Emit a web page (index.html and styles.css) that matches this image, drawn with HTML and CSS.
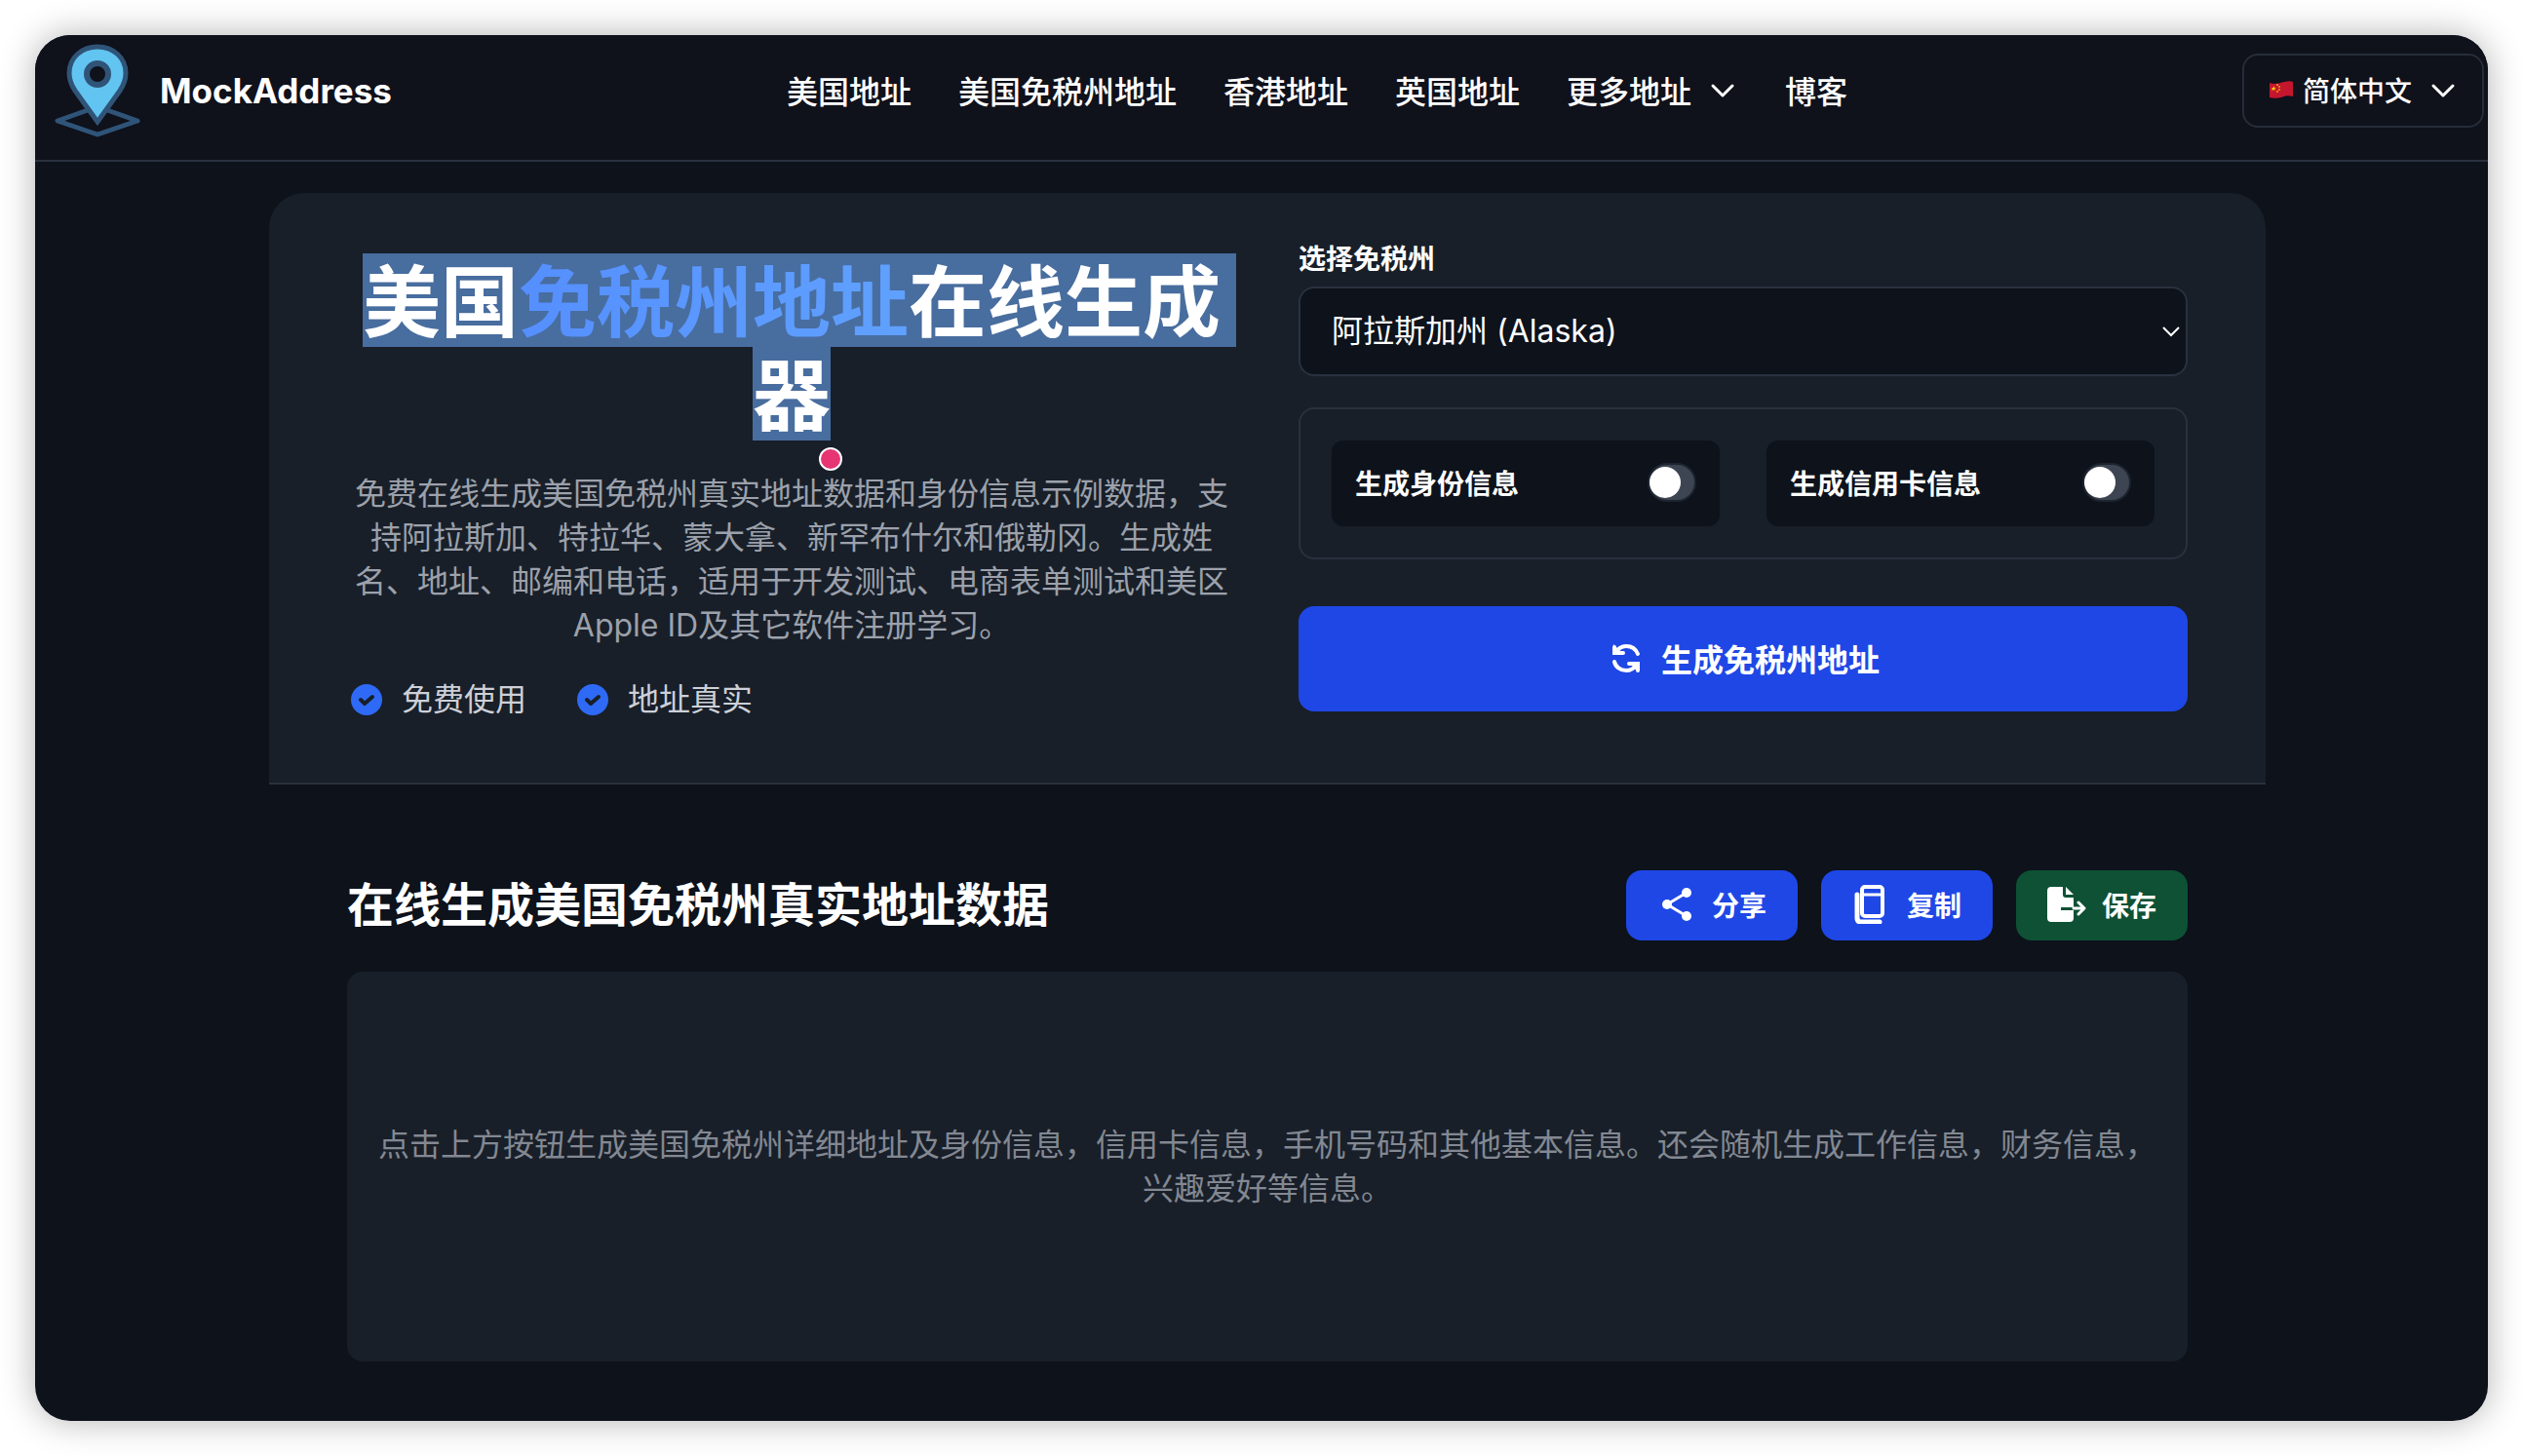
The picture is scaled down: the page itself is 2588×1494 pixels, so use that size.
FILE: index.html
```html
<!DOCTYPE html>
<html lang="zh-CN">
<head>
  <meta charset="UTF-8" />
  <meta name="viewport" content="width=device-width, initial-scale=1.0" />
  <title>美国免税州地址在线生成器 - MockAddress</title>
  <link rel="stylesheet" href="styles.css">
</head>
<body>
  <div class="window">
    <header class="site-header">
      <a href="#" class="brand">
        <svg class="brand-logo" viewBox="0 0 96 96" aria-hidden="true">
          <path d="M38 68 L7 79 L48 93 L89 79 L58 68" fill="none" stroke="#2f5478" stroke-width="5" stroke-linejoin="round"/>
          <path d="M48 80 L25 48 C21 42 19 36 19 30 C19 14 32 3 48 3 C64 3 77 14 77 30 C77 36 75 42 71 48 Z" fill="#62c4f1" stroke="#2f5478" stroke-width="5"/>
          <circle cx="48" cy="31" r="11" fill="#0f111b" stroke="#2f5478" stroke-width="6"/>
        </svg>
        <span>MockAddress</span>
      </a>
      <nav class="main-nav">
        <a href="#">美国地址</a>
        <a href="#">美国免税州地址</a>
        <a href="#">香港地址</a>
        <a href="#">英国地址</a>
        <a href="#" class="has-menu">更多地址
          <svg class="chevron" viewBox="0 0 32 32" aria-hidden="true"><path d="M6 12l10 10 10-10"/></svg>
        </a>
        <a href="#">博客</a>
      </nav>
      <button type="button" class="lang-btn">
        <svg class="flag" viewBox="0 0 24 18" aria-hidden="true">
          <path d="M0 2 C6 4 11 2 15 1 C19 0 22 0 24 1 V16 C20 15 16 15 12 17 C8 18 4 18 0 17 Z" fill="#c5162e"/>
          <path d="M4 5l1 2h2l-2 1 1 2-2-1-2 1 1-2-1-1h2z" fill="#ffd800"/>
          <circle cx="8" cy="4" r="1" fill="#e8a317"/>
          <circle cx="10" cy="6" r="1" fill="#e8a317"/>
          <circle cx="10" cy="9" r="1" fill="#e8a317"/>
          <circle cx="8" cy="11" r="1" fill="#e8a317"/>
        </svg>
        <span>简体中文</span>
        <svg class="chevron" viewBox="0 0 32 32" aria-hidden="true"><path d="M6 12l10 10 10-10"/></svg>
      </button>
    </header>

    <main>
      <section class="hero">
        <div class="hero-text">
          <h1><span class="line line-full">美国<span class="accent">免税州地址</span>在线生成</span><span class="line">器<i class="handle"></i></span></h1>
          <p>免费在线生成美国免税州真实地址数据和身份信息示例数据，支持阿拉斯加、特拉华、蒙大拿、新罕布什尔和俄勒冈。生成姓名、地址、邮编和电话，适用于开发测试、电商表单测试和美区Apple ID及其它软件注册学习。</p>
          <ul class="features">
            <li>
              <svg viewBox="0 0 40 40" aria-hidden="true"><circle cx="20" cy="20" r="16" fill="#2e6af5"/><path d="M14 20l4 4 8-7" class="tick"/></svg>
              免费使用
            </li>
            <li>
              <svg viewBox="0 0 40 40" aria-hidden="true"><circle cx="20" cy="20" r="16" fill="#2e6af5"/><path d="M14 20l4 4 8-7" class="tick"/></svg>
              地址真实
            </li>
          </ul>
        </div>

        <form class="generator">
          <label for="state" class="field-label">选择免税州</label>
          <div class="select-wrap">
            <select id="state">
              <option>阿拉斯加州 (Alaska)</option>
              <option>特拉华州 (Delaware)</option>
              <option>蒙大拿州 (Montana)</option>
              <option>新罕布什尔州 (New Hampshire)</option>
              <option>俄勒冈州 (Oregon)</option>
            </select>
            <svg class="select-arrow" viewBox="0 0 18 12" aria-hidden="true"><path d="M1 2l8 8 8-8"/></svg>
          </div>
          <div class="options">
            <label class="option" for="identity">生成身份信息<input type="checkbox" id="identity" class="switch"></label>
            <label class="option" for="card">生成信用卡信息<input type="checkbox" id="card" class="switch"></label>
          </div>
          <button type="button" class="generate-btn">
            <svg viewBox="0 0 40 40" aria-hidden="true">
              <path d="M8 9 V15 H17 M9 15 C12 10 16 8 20 8 C26 8 30 11 32 16" />
              <path d="M32 33 V26 H23 M31 27 C28 31 24 33 20 33 C14 33 9 29 8 24" />
              <path d="M7 6 L17 16 H7 Z M33 35 V25 H23 Z" class="solid"/>
            </svg>
            生成免税州地址
          </button>
        </form>
      </section>

      <section class="results">
        <div class="results-head">
          <h2>在线生成美国免税州真实地址数据</h2>
          <div class="actions">
            <button type="button" class="action">
              <svg viewBox="0 0 40 40" aria-hidden="true">
                <path d="M30 8 L10 20 L30 32" fill="none" stroke="currentColor" stroke-width="3"/>
                <circle cx="30" cy="8" r="5"/><circle cx="10" cy="20" r="5"/><circle cx="30" cy="32" r="5"/>
              </svg>
              分享
            </button>
            <button type="button" class="action">
              <svg viewBox="0 0 40 40" aria-hidden="true">
                <g fill="none" stroke="currentColor" stroke-width="4" stroke-linecap="round" stroke-linejoin="round">
                  <rect x="10" y="2" width="21" height="30" rx="3"/>
                  <path d="M11 10H30" stroke-width="3" stroke-linecap="butt"/>
                  <path d="M5 10V34Q5 38 9 38H28" stroke-width="5"/>
                </g>
              </svg>
              复制
            </button>
            <button type="button" class="action save">
              <svg viewBox="0 0 40 40" aria-hidden="true">
                <path d="M4 2H16V10Q16 13 19 13H27V23H14V26H27V34Q27 38 23 38H4Q0 38 0 34V6Q0 2 4 2Z"/>
                <path d="M19 2L27 10H19Z"/>
                <path d="M27 24H37M32 18L38 24L32 30" fill="none" stroke="currentColor" stroke-width="3" stroke-linecap="round" stroke-linejoin="round"/>
              </svg>
              保存
            </button>
          </div>
        </div>
        <div class="result-box">
          <p>点击上方按钮生成美国免税州详细地址及身份信息，信用卡信息，手机号码和其他基本信息。还会随机生成工作信息，财务信息，兴趣爱好等信息。</p>
        </div>
      </section>
    </main>
  </div>
</body>
</html>
```
FILE: styles.css
```css
* {
  box-sizing: border-box;
}

body {
  font-family: Inter, 'Noto Sans CJK SC', sans-serif;
  font-size: 32px;
  margin: 0;
  padding: 36px;
  background: #fff;
  color: #fff;
}

a {
  color: inherit;
  text-decoration: none;
}

button,
select {
  font: inherit;
  color: inherit;
}

h1, h2, p, ul {
  margin: 0;
  padding: 0;
}

.window {
  min-height: calc(100vh - 72px);
  background: #0d121b;
  border-radius: 36px;
  overflow: hidden;
  box-shadow: 0 0 36px rgba(0, 0, 0, 0.3);
}

/* header */
.site-header {
  display: flex;
  justify-content: space-between;
  align-items: center;
  padding: 9px 4px 23px 16px;
  background: #0f111b;
  border-bottom: 2px solid #2a313e;
}

.brand {
  display: flex;
  align-items: center;
  gap: 16px;
  font-size: 35px;
  font-weight: 700;
}

.brand-logo {
  width: 96px;
  height: 96px;
}

.main-nav {
  display: flex;
  align-items: center;
  gap: 48px;
  padding-bottom: 2px;
  font-weight: 500;
}

.has-menu {
  display: flex;
  align-items: center;
  gap: 16px;
}

.chevron {
  width: 32px;
  height: 32px;
  fill: none;
  stroke: currentColor;
  stroke-width: 3;
  stroke-linecap: round;
  stroke-linejoin: round;
}

.lang-btn {
  display: flex;
  align-items: center;
  height: 76px;
  padding: 0 24px 2px 26px;
  background: none;
  border: 2px solid #262d39;
  border-radius: 16px;
  font-size: 28px;
  font-weight: 500;
}

.flag {
  width: 24px;
  height: 18px;
  margin-right: 10px;
}

.lang-btn .chevron {
  margin-left: 16px;
}

/* hero */
main {
  box-sizing: content-box;
  max-width: 2048px;
  margin: 0 auto;
  padding: 32px 0 48px 12px;
}

.hero {
  display: grid;
  grid-template-columns: 1fr 1fr;
  gap: 64px;
  padding: 48px 80px 59px;
  background: #181f29;
  border-bottom: 2px solid #2a313d;
  border-radius: 36px 36px 0 0;
}

.hero-text {
  padding-top: 14px;
  text-align: center;
}

h1 {
  display: flex;
  flex-direction: column;
  align-items: center;
  font-size: 80px;
  font-weight: 700;
  line-height: 92px;
}

.line {
  position: relative;
  padding-top: 4px;
  background: #486d9f;
}

/* the selection runs on to the end of the column */
.line-full {
  padding-right: 16px;
  margin-right: -16px;
}

.accent {
  background: linear-gradient(90deg, #558fff, #60a1ff);
  -webkit-background-clip: text;
  background-clip: text;
  color: transparent;
}

.handle {
  position: absolute;
  right: -12px;
  bottom: -31px;
  width: 24px;
  height: 24px;
  background: #e73473;
  border: 2px solid #fff;
  border-radius: 50%;
}

.hero-text p {
  margin-top: 32px;
  color: #9ca1ab;
  line-height: 45px;
}

.features {
  display: flex;
  gap: 48px;
  margin-top: 28px;
  list-style: none;
  color: #cdd0d8;
  line-height: 52px;
}

.features li {
  display: flex;
  align-items: center;
  gap: 16px;
}

.features svg,
.generate-btn svg,
.action svg {
  width: 40px;
  height: 40px;
  flex: none;
}

.tick {
  fill: none;
  stroke: #181f29;
  stroke-width: 4;
  stroke-linecap: round;
  stroke-linejoin: round;
}

/* form */
.field-label {
  display: block;
  font-size: 28px;
  font-weight: 600;
  line-height: 40px;
  margin-bottom: 8px;
}

.select-wrap {
  position: relative;
}

.select-wrap select {
  display: block;
  width: 100%;
  height: 92px;
  padding: 0 32px 2px;
  appearance: none;
  background: #0d121b;
  border: 2px solid #2a313e;
  border-radius: 16px;
}

.select-arrow {
  position: absolute;
  right: 8px;
  top: 40px;
  width: 18px;
  height: 12px;
  fill: none;
  stroke: #fff;
  stroke-width: 2;
  pointer-events: none;
}

.options {
  display: grid;
  grid-template-columns: 1fr 1fr;
  gap: 48px;
  margin: 32px 0 48px;
  padding: 32px;
  border: 2px solid #2a313d;
  border-radius: 16px;
}

.option {
  display: flex;
  justify-content: space-between;
  align-items: center;
  height: 88px;
  padding: 0 24px 2px;
  background: #0d121b;
  border-radius: 12px;
  font-size: 28px;
  font-weight: 600;
}

.switch {
  appearance: none;
  width: 50px;
  height: 40px;
  margin: 0;
  padding: 2px 0;
  background: #3d4552;
  border: 2px solid #1c2430;
  border-radius: 20px;
}

.switch::before {
  content: '';
  display: block;
  width: 32px;
  height: 32px;
  background: #fff;
  border-radius: 50%;
}

.switch:checked {
  background: #2e6af5;
}

.generate-btn {
  display: flex;
  justify-content: center;
  align-items: center;
  gap: 16px;
  width: 100%;
  height: 108px;
  padding: 0 0 2px;
  background: #1f47e6;
  border: none;
  border-radius: 16px;
  font-weight: 600;
}

.generate-btn path {
  fill: none;
  stroke: currentColor;
  stroke-width: 4;
  stroke-linecap: round;
}

.generate-btn .solid {
  fill: currentColor;
  stroke: none;
}

/* results */
.results {
  padding: 88px 80px 0;
}

.results-head {
  display: flex;
  justify-content: space-between;
  align-items: center;
  margin-bottom: 32px;
}

h2 {
  font-size: 48px;
  font-weight: 700;
  line-height: 72px;
}

.actions {
  display: flex;
  gap: 24px;
}

.action {
  display: flex;
  align-items: center;
  gap: 16px;
  height: 72px;
  padding: 0 32px 2px;
  background: #1f47e6;
  border: none;
  border-radius: 16px;
  font-size: 28px;
  font-weight: 600;
}

.action svg {
  fill: currentColor;
}

.action.save {
  background: #0e5135;
}

.result-box {
  display: flex;
  justify-content: center;
  align-items: center;
  min-height: 400px;
  padding: 0 32px;
  background: #181f29;
  border-radius: 16px;
  color: #838892;
  line-height: 45px;
  text-align: center;
}
```
